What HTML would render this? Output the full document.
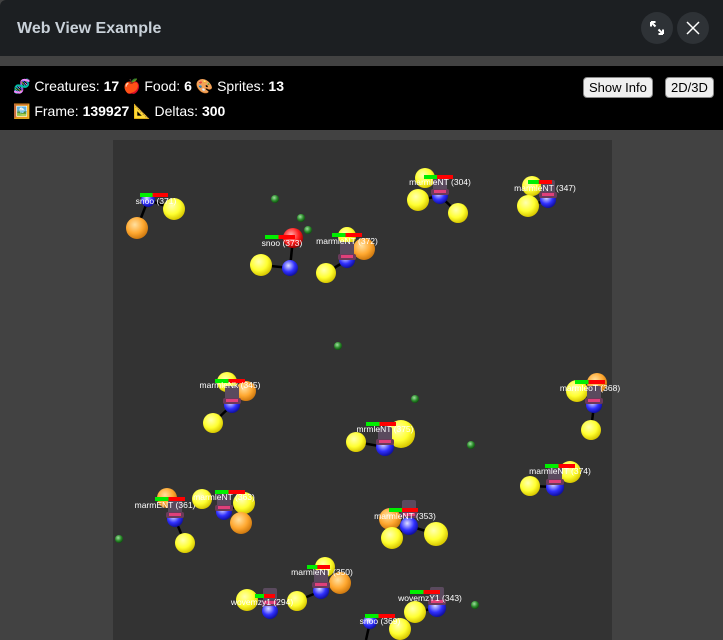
<!DOCTYPE html>
<html><head><meta charset="utf-8"><style>
*{margin:0;padding:0;box-sizing:border-box}
body{width:723px;height:640px;overflow:hidden;background:#424242;font-family:"Liberation Sans",sans-serif;position:relative}
#hdr{position:absolute;left:0;top:0;width:723px;height:56px;background:#1c1f22;border-top-left-radius:6px}
#hdr .t{position:absolute;left:17px;top:20px;color:#c9d1d9;font-weight:bold;font-size:16px}
.cb{position:absolute;top:12px;width:32px;height:32px;border-radius:50%;background:#2e3236}
#info{position:absolute;left:0;top:66px;width:723px;height:64px;background:#000;color:#fff;font-size:14px}
#info .l{position:absolute;left:13px;white-space:nowrap}
#info b{font-weight:bold}
.btn{position:absolute;top:11px;height:21px;background:#efefef;border:1px solid #888;border-radius:4px;color:#000;font-size:13px;line-height:19px;padding:0 5px}
#cv{position:absolute;left:113px;top:140px;width:499px;height:500px;background:#333}
svg{position:absolute;left:0;top:0}
</style></head><body>
<div id="hdr"><div class="t">Web View Example</div>
<div class="cb" style="left:641px"><svg width="32" height="32" viewBox="0 0 32 32"><path d="M10.5 10.5l4 4M10 10v4.5M10 10h4.5M21.5 21.5l-4-4M22 22v-4.5M22 22h-4.5" stroke="#fff" stroke-width="2" fill="none"/></svg></div>
<div class="cb" style="left:677px"><svg width="32" height="32" viewBox="0 0 32 32"><path d="M10 10l12 12M22 10l-12 12" stroke="#fff" stroke-width="1.5"/></svg></div>
</div>
<div id="info">
<div class="l" style="top:12px">🧬 Creatures: <b>17</b> 🍎 Food: <b>6</b> 🎨 Sprites: <b>13</b></div>
<div class="l" style="top:37px">🖼️ Frame: <b>139927</b> 📐 Deltas: <b>300</b></div>
<div class="btn" style="left:583px">Show Info</div>
<div class="btn" style="left:665px">2D/3D</div>
</div>
<div id="cv"></div>
<svg id="s" width="723" height="640"></svg>
<script>
var g='<defs>';
[['y','#ffffb0','#ffff30','#d8c800'],['o','#ffe0a0','#ffa830','#d07a10'],['b','#e0e0ff','#3030ff','#1010a0'],['r','#ffb0b0','#ff2020','#a00000'],['g','#a0e0a0','#2a8a2a','#105010']].forEach(function(c){g+='<radialGradient id="'+c[0]+'" cx="0.4" cy="0.35" r="0.65"><stop offset="0" stop-color="'+c[1]+'"/><stop offset="0.6" stop-color="'+c[2]+'"/><stop offset="1" stop-color="'+c[3]+'"/></radialGradient>'});
g+='</defs>';
function B(x,y,r,c){if(c!='g')r+=1;g+='<circle cx="'+x+'" cy="'+y+'" r="'+r+'" fill="url(#'+c+')"/>'}
function L(a,b,c,d){g+='<line x1="'+a+'" y1="'+b+'" x2="'+c+'" y2="'+d+'" stroke="#000" stroke-width="2.5"/>'}
function H(x,y){g+='<rect x="'+(x-7)+'" y="'+(y-10)+'" width="14" height="14" rx="2" fill="#5a4a5e"/><rect x="'+(x-9)+'" y="'+(y+2)+'" width="18" height="6" rx="2" fill="#6a3a5a"/><rect x="'+(x-6)+'" y="'+(y+3)+'" width="12" height="3" fill="#e0407a"/>'}
function T(x,y,t,a,b,by){g+='<rect x="'+a+'" y="'+by+'" width="'+(b-a)+'" height="4" fill="#f00"/><rect x="'+a+'" y="'+by+'" width="'+((b-a)*0.45)+'" height="4" fill="#0e0"/><text x="'+x+'" y="'+(y+3)+'" font-size="8.5" fill="#fff" text-anchor="middle" font-family="Liberation Sans">'+t+'</text>'}
L(148,200,137,228);L(148,200,174,209);B(137,228,10,'o');B(174,209,10,'y');B(148,200,6,'b');T(156,201,'snoo (371)',140,168,193);
L(293,238,290,268);L(290,268,261,265);B(261,265,10,'y');B(290,268,7,'b');B(293,238,9,'r');T(282,243,'snoo (373)',265,295,235);
L(347,260,326,273);B(347,236,8,'y');B(364,249,10,'o');B(326,273,9,'y');B(347,260,7,'b');H(347,252);T(347,241,'marmleNT (372)',332,362,233);
L(440,196,418,200);L(440,196,458,213);B(425,178,9,'y');B(418,200,10,'y');B(458,213,9,'y');B(440,196,7,'b');H(440,187);T(440,182,'marmleNT (304)',424,453,175);
L(548,200,528,206);B(532,186,9,'y');B(528,206,10,'y');B(548,200,7,'b');H(548,190);T(545,188,'marmleNT (347)',528,552,180);
L(232,405,213,423);B(227,382,9,'y');B(246,391,9,'o');B(213,423,9,'y');B(232,405,7,'b');H(232,396);T(230,385,'marmleNk (345)',215,245,379);
L(594,405,591,430);B(597,383,9,'o');B(577,391,10,'y');B(591,430,9,'y');B(594,405,7,'b');H(594,396);T(590,388,'marmleoT (368)',575,605,380);
L(385,447,356,442);B(401,434,13,'y');B(356,442,9,'y');B(385,447,8,'b');H(385,437);T(385,429,'mrmleNT (375)',366,396,422);
L(555,487,530,486);B(570,472,10,'y');B(530,486,9,'y');B(555,487,8,'b');H(555,477);T(560,471,'marmleNT (374)',545,575,464);
L(175,519,185,543);B(167,498,9,'o');B(185,543,9,'y');B(175,519,7,'b');H(175,510);T(165,505,'marmENT (361)',155,185,497);
L(224,512,244,503);B(202,499,9,'y');B(244,503,10,'y');B(241,523,10,'o');B(224,512,7,'b');H(224,503);T(224,497,'marmleNT (363)',215,245,490);
L(409,526,392,538);L(409,526,436,534);B(390,519,10,'o');B(392,538,10,'y');B(436,534,11,'y');B(409,526,8,'b');H(409,510);T(405,516,'marmleNT (353)',389,418,508);
L(321,591,297,601);B(325,567,9,'y');B(340,583,10,'o');B(297,601,9,'y');B(321,591,7,'b');H(321,580);T(322,572,'marmleNT (350)',307,330,565);
B(247,600,10,'y');B(270,611,7,'b');H(270,598);T(262,602,'wovemzy1 (294)',255,275,594);
L(437,608,415,612);B(415,612,10,'y');B(437,608,8,'b');H(437,597);T(430,598,'wovemzY1 (343)',410,440,590);
L(370,622,366,640);B(400,629,10,'y');B(370,622,6,'b');T(380,621,'snoo (369)',365,395,614);
[[275,199],[301,218],[308,230],[338,346],[415,399],[471,445],[119,539],[475,605]].forEach(function(p){B(p[0],p[1],4,'g')});
document.getElementById('s').innerHTML=g;
</script>
</body></html>
